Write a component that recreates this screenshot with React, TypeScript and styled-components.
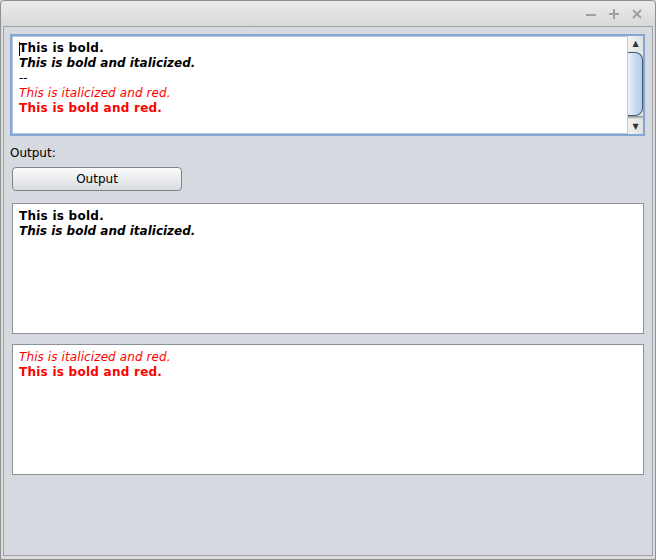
import React from "react";
import styled, { createGlobalStyle } from "styled-components";

const Global = createGlobalStyle`
  html, body { margin: 0; padding: 0; background: #d6d9e0; }
  body { font-family: "DejaVu Sans", sans-serif; }
`;

const Window = styled.div`
  width: 656px;
  height: 560px;
  box-sizing: border-box;
  border: 1px solid #909090;
  border-radius: 4px 4px 0 0;
  background: #dcdcdc;
  display: flex;
  flex-direction: column;
  padding: 0 2px 3px 1px;
`;

const TitleBar = styled.div`
  height: 25px;
  flex: none;
  margin: 0 -2px 0 -1px;
  border-radius: 4px 4px 0 0;
  background: linear-gradient(#ebebeb, #d8d8d8);
  display: flex;
  justify-content: flex-end;
  align-items: center;
  gap: 13px;
  padding-right: 13px;
`;

const TitleIcon = styled.svg`
  width: 10px;
  height: 10px;
  stroke: #a0a0a0;
  stroke-width: 2;
  fill: none;
`;

const Content = styled.div`
  flex: 1;
  margin-left: 1px;
  border: 1px solid #9da0a8;
  background: #d6d9e0;
  display: flex;
  flex-direction: column;
  padding: 7px 7px 0 6px;
`;

const Editor = styled.div`
  height: 98px;
  border: 2px solid #85a6d1;
  box-shadow: inset 0 0 0 1px #b4c8e4;
  background: #fff;
  display: flex;
`;

const EditorText = styled.div`
  flex: 1;
  padding: 5px 7px;
  position: relative;
`;

const Caret = styled.span`
  position: absolute;
  left: 7px;
  top: 6px;
  width: 1px;
  height: 14px;
  background: #000;
`;

const Line = styled.div<{ $bold?: boolean; $italic?: boolean; $red?: boolean }>`
  font-size: 12px;
  line-height: 15px;
  height: 15px;
  white-space: pre;
  font-weight: ${(p) => (p.$bold ? 700 : 400)};
  font-style: ${(p) => (p.$italic ? "oblique" : "normal")};
  letter-spacing: ${(p) => (p.$bold && !p.$italic ? "0.25px" : p.$italic && !p.$bold ? "0.1px" : "0")};
  color: ${(p) => (p.$red ? "#ff0000" : "#000")};
`;

const Scrollbar = styled.div`
  width: 15px;
  border-left: 1px solid #c8c8c8;
  background: #e6e6e6;
  display: flex;
  flex-direction: column;
`;

const Arrow = styled.div`
  height: 15px;
  display: flex;
  align-items: center;
  justify-content: center;
  font-size: 8px;
  color: #333;
  background: linear-gradient(90deg, #f2f2f2, #e0e0e0);
`;

const Thumb = styled.div`
  height: 64px;
  margin: 1px 0 0 0;
  box-sizing: border-box;
  border: 1px solid #3c5a78;
  border-left: none;
  border-radius: 0 8px 8px 0;
  background: linear-gradient(90deg, #eaf2fa, #c2d8ee 60%, #b5cde6);
`;

const ThumbShadow = styled.div`
  height: 4px;
  flex: 1;
  background: linear-gradient(#8a8a8a, #e6e6e6);
`;

const Label = styled.div`
  font-size: 12px;
  line-height: 15px;
  color: #000;
  margin: 10px 0 0 0;
`;

const Button = styled.button`
  width: 170px;
  height: 24px;
  margin: 6px 0 0 2px;
  border: 1px solid #80848a;
  border-radius: 4px;
  background: linear-gradient(#fbfbfb, #e8e9eb 55%, #d9dbdf);
  font-family: "DejaVu Sans", sans-serif;
  font-size: 12px;
  color: #000;
  padding: 0;
`;

const Panel = styled.div<{ $gap: number }>`
  height: 131px;
  box-sizing: border-box;
  margin: ${(p) => p.$gap}px 1px 0 2px;
  border: 1px solid #8e9097;
  background: #fff;
  padding: 5px 6px 4px;
`;

function Icons() {
  return (
    <>
      <TitleIcon viewBox="0 0 10 10">
        <line x1="0" y1="6" x2="10" y2="6" />
      </TitleIcon>
      <TitleIcon viewBox="0 0 10 10">
        <line x1="0" y1="5" x2="10" y2="5" />
        <line x1="5" y1="0" x2="5" y2="10" />
      </TitleIcon>
      <TitleIcon viewBox="0 0 10 10">
        <line x1="1" y1="1" x2="9" y2="9" />
        <line x1="9" y1="1" x2="1" y2="9" />
      </TitleIcon>
    </>
  );
}

export default function App() {
  return (
    <>
      <Global />
      <Window>
        <TitleBar>
          <Icons />
        </TitleBar>
        <Content>
          <Editor>
            <EditorText>
              <Caret />
              <Line $bold>This is bold.</Line>
              <Line $bold $italic>This is bold and italicized.</Line>
              <Line>--</Line>
              <Line $italic $red>This is italicized and red.</Line>
              <Line $bold $red>This is bold and red.</Line>
            </EditorText>
            <Scrollbar>
              <Arrow>▲</Arrow>
              <Thumb />
              <ThumbShadow />
              <Arrow>▼</Arrow>
            </Scrollbar>
          </Editor>
          <Label>Output:</Label>
          <Button>Output</Button>
          <Panel $gap={12}>
            <Line $bold>This is bold.</Line>
            <Line $bold $italic>This is bold and italicized.</Line>
          </Panel>
          <Panel $gap={10}>
            <Line $italic $red>This is italicized and red.</Line>
            <Line $bold $red>This is bold and red.</Line>
          </Panel>
        </Content>
      </Window>
    </>
  );
}
